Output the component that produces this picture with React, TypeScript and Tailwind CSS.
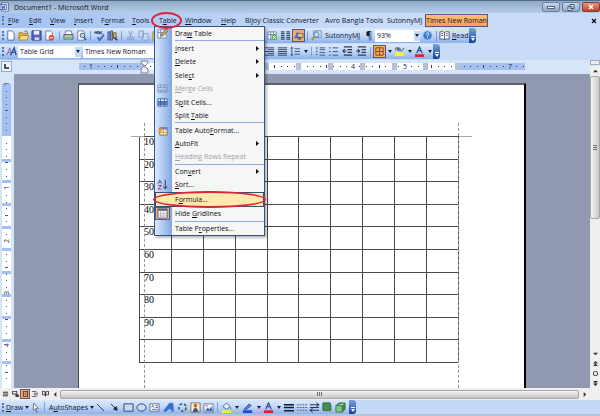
import { Fragment, type ReactNode } from "react";
import clsx from "clsx";

const ui = "font-['Open_Sans','Noto_Sans',sans-serif]";

const glyphs: Record<string, ReactNode> = {
  blank: <path d="M3 1h5l2 3v7H3z" fill="#fff" stroke="#5a6b94" />,
  open: (
    <>
      <path d="M1 3h4l1 1h4v6H1z" fill="#e8b64c" stroke="#a8792a" />
      <path d="M3 6h9l-2 5H1z" fill="#fbdc83" stroke="#b58628" />
      <path d="M7 2c2-2 4 0 3 2" fill="none" stroke="#3f6a3c" />
    </>
  ),
  save: (
    <>
      <path d="M1 1h10v10H1z" fill="#5b5fc0" stroke="#373b8c" />
      <path d="M3 1h6v4H3z" fill="#e9efff" />
      <path d="M4 8h5v3H4z" fill="#d0d4e4" />
    </>
  ),
  permission: (
    <>
      <path d="M2 1h5l2 2v8H2z" fill="#fff" stroke="#6b7898" />
      <circle cx="8" cy="8.500" r="3" fill="#df4d2c" />
      <path d="M6 8.500h4" stroke="#fff" />
    </>
  ),
  print: (
    <>
      <path d="M3 1h6l1 4H2z" fill="#fff" stroke="#6d7890" />
      <path d="M1 5h10v5H1z" fill="#b4bcc4" stroke="#586070" />
      <path d="M3 8h6v3H3z" fill="#75b66e" />
    </>
  ),
  preview: (
    <>
      <path d="M2 1h6l1 2v8H2z" fill="#fff" stroke="#6b7898" />
      <circle cx="7" cy="6" r="2.500" fill="#bcd8f4" stroke="#44546e" />
      <path d="m9 8 2 3" stroke="#44546e" strokeWidth="1.500" />
    </>
  ),
  spelling: (
    <>
      <path d="M1 4V2h2v2M4 1v3h2V2H4M9 2H7v2h2M1 3h2" fill="none" stroke="#333c66" />
      <path d="m4 8 2 3 5-6" fill="none" stroke="#3967c8" strokeWidth="2" />
    </>
  ),
  research: (
    <>
      <path d="M1 2h2v9H1zM4 1h2v10H4z" fill="#8ea5d4" stroke="#45598c" />
      <path d="M7 3h3v6H7z" fill="#e5b14d" stroke="#826426" />
      <path d="m8 8 3 3" stroke="#3d4664" strokeWidth="2" />
    </>
  ),
  cut: <path d="m4 1 3 7M8 1 5 8M4 8a1 1 0 1 0 0 3 1 1 0 0 0 0-3M8 8a1 1 0 1 0 0 3 1 1 0 0 0 0-3" fill="none" stroke="#8297bd" />,
  copy: <path d="M1 1h5v7H1zM5 4h6v7H5z" fill="#cbd9f0" stroke="#8ca1c8" />,
  paste: <path d="M2 2h8v9H2zM4 1h4v2H4z" fill="#eeca79" stroke="#a98439" />,
  sheet: (
    <>
      <path d="M1 2h9v8H1zM1 5h9M4 2v8M7 2v8" fill="#fff" stroke="#6681aa" />
      <path d="M5 5h6v6H5z" fill="#5ea84f" />
      <path d="m6 6 4 4M10 6l-4 4" stroke="#fff" />
    </>
  ),
  columns: <path d="M1 2h4M1 4h4M1 6h4M1 8h4M1 10h4M7 2h4M7 4h4M7 6h4M7 8h4M7 10h4" stroke="#414d68" strokeWidth="1.300" />,
  drawing: (
    <>
      <path d="M5 1 1 9h6z" fill="#3f77c9" />
      <path d="M5 4h6v4H5z" fill="#e6d18b" stroke="#665e70" />
      <circle cx="7" cy="9" r="2" fill="#5366a6" />
    </>
  ),
  docmap: (
    <>
      <path d="M3 1h8v7H3z" fill="#fff" stroke="#5b80b6" />
      <circle cx="6" cy="5" r="3" fill="#b8dcf4" stroke="#4871a6" />
      <path d="M4 7 1 11" stroke="#c08835" strokeWidth="2" />
    </>
  ),
  help: (
    <>
      <circle cx="6" cy="6" r="5" fill="#3c79cf" stroke="#a6c8f0" />
      <path d="M4.500 5c0-3 4-2 3 0L6 6v1M6 8v1" fill="none" stroke="#fff" />
    </>
  ),
  read: <path d="M6 3C4 1 2 2 1 2v8c2 0 4-1 5 1 1-2 3-1 5-1V2C9 2 7 1 6 3zv8M2.500 4h2M2.500 6h2M7.500 4h2M7.500 6h2" fill="#fff" stroke="#49566e" />,
  styles: (
    <>
      <path d="m1 10 3-8 2 8M2 7h3" fill="none" stroke="#9b5aa2" />
      <path d="m5 10 4-8 2 8M6 7h5" fill="none" stroke="#2c55a6" strokeWidth="1.500" />
    </>
  ),
  right: <path d="M1 2h10M4 4h7M1 6h10M4 8h7M1 10h10" stroke="#333e58" />,
  justify: <path d="M1 2h10M1 4h10M1 6h10M1 8h10M1 10h10" stroke="#333e58" />,
  spacing: <path d="M2 2v8M1 3l1-2 1 2M1 9l1 2 1-2M5 3h6M5 6h6M5 9h6" fill="none" stroke="#3c5484" />,
  numbers: <path d="M2 1v3M1 6h2M1 9h2M5 2h6M5 4h6M5 7h6M5 10h6" stroke="#3c5484" />,
  bullets: <path d="M1 2h2M1 6h2M1 10h2M5 2h6M5 6h6M5 10h6" stroke="#3c5484" />,
  outdent: <path d="M2 1h9M6 4h5M6 7h5M2 10h9M5 5.500H1m2-2-2 2 2 2" fill="none" stroke="#303b58" strokeWidth="1.200" />,
  indent: <path d="M2 1h9M6 4h5M6 7h5M2 10h9M0 5.500h4m-2-2 2 2-2 2" fill="none" stroke="#303b58" strokeWidth="1.200" />,
  borders: <path d="M2 2h8v8H2zM6 2v8M2 6h8" fill="none" stroke="#7c4514" />,
  highlight: (
    <>
      <path d="M1 7h10v4H1z" fill="#f7ee35" />
      <path d="M2 5V2h2v3M5 1v4h2V3H5M8 6l3-4" fill="none" stroke="#444d62" />
    </>
  ),
  fontColor: (
    <>
      <path d="m3 8 3-7 3 7M4 5h4" fill="none" stroke="#2e4d94" strokeWidth="1.300" />
      <path d="M1 9h10v3H1z" fill="#e02030" />
    </>
  ),
  drawTable: (
    <>
      <path d="M1 2h9v9H1zM1 5h9M4 2v9" fill="#f5f8ff" stroke="#7187b4" />
      <path d="m4 8 6-7 2 2-6 6z" fill="#dfae4e" stroke="#765c35" />
    </>
  ),
  merge: <path d="M1 2h10v8H1zM1 5h10M1 8h10M4 2v3M8 2v3M4 8v2M8 8v2" fill="none" stroke="#8499bd" />,
  split: (
    <>
      <path d="M1 2h10v8H1z" fill="#f8fbff" stroke="#345a9e" />
      <path d="M1 5h10v3H1z" fill="#5686cf" />
      <path d="M4 2v8M8 2v8M1 5h10M1 8h10" stroke="#345a9e" />
    </>
  ),
  autoFormat: (
    <>
      <path d="M3 3h8v8H3z" fill="#fff3c8" stroke="#8b6a48" />
      <path d="M3 3h8v2H3z" fill="#5b86cb" />
      <path d="M7 5v6M3 8h8" stroke="#c79a55" />
      <path d="M4 2 3 4 1 4l1 2-1 2 2-1 2 1V6l1-2-2 0z" fill="#f59a26" />
    </>
  ),
  sort: (
    <>
      <path d="m1 5 2-4 2 4M2 4h2" fill="none" stroke="#345fae" />
      <path d="M1 7h4l-4 4h4" fill="none" stroke="#9a4163" />
      <path d="M9 1v9M7 8l2 3 2-3" fill="none" stroke="#263553" />
    </>
  ),
  grid: (
    <>
      <path d="M1 1h10v10H1z" fill="#f7f2ea" stroke="#57618b" />
      <path d="M1 2h10" stroke="#57618b" strokeWidth="2" />
      <path d="M4 3v8M7 3v8M1 6h10M1 8.500h10" stroke="#8c90a8" strokeDasharray="1 1" />
    </>
  ),
  pointer: <path d="m4 1 5 6H6l2 4-1 .500-2-4-1.500 1.500z" fill="#fff" stroke="#66748c" />,
  line: <path d="m2 2 8 8" stroke="#26345a" />,
  arrow: <path d="m2 2 5 5M9 9 5 8l3-3z" fill="#1c2744" stroke="#1c2744" />,
  rect: <path d="M1 2h10v8H1z" fill="#c6daf6" stroke="#2b416e" />,
  oval: <ellipse cx="6" cy="6" rx="5" ry="4" fill="#c6daf6" stroke="#2b416e" />,
  textbox: (
    <>
      <path d="M1 2h10v8H1z" fill="#fff" stroke="#5c6e92" />
      <path d="m3 6 1-3 1 3M7 4h3M7 6h3M3 8h7" fill="none" stroke="#5c6e92" />
    </>
  ),
  wordArt: <path d="M0 10 7 1h4l1 9-3 1V8H6l-3 3z" fill="#346ed0" stroke="#7ba4e6" strokeWidth=".500" />,
  diagram: (
    <>
      <circle cx="6" cy="6" r="4" fill="none" stroke="#45608d" strokeWidth="2" strokeDasharray="3 2" />
      <path d="M8 9h3v2H8z" fill="#dba146" />
    </>
  ),
  clip: (
    <>
      <path d="M1 1h10v10H1z" fill="#f9edce" stroke="#7f6d50" />
      <circle cx="6" cy="4" r="2" fill="#b56c38" />
      <path d="M3 11c0-6 6-6 6 0" fill="#4a577c" />
    </>
  ),
  picture: (
    <>
      <path d="M1 2h10v9H1z" fill="#eef4ff" stroke="#6a7b9c" />
      <path d="m2 10 3-4 2 2 2-3 2 5z" fill="#5272a4" />
      <circle cx="4" cy="4" r="1" fill="#d4823c" />
    </>
  ),
  fill: (
    <>
      <path d="M1 9h10v3H1z" fill="#f6ef34" />
      <path d="m2 5 4-4 4 4-4 3z" fill="#e8eef9" stroke="#4c618c" />
      <path d="M10 5c2 2 1 4 0 3" fill="#3d70c5" />
    </>
  ),
  lineColor: (
    <>
      <path d="M1 9h10v3H1z" fill="#2445e8" />
      <path d="m2 8 6-6 2 2-5 4z" fill="#5480c6" stroke="#3c5c97" />
    </>
  ),
  weight: <path d="M1 3h11M1 6h11M1 9.500h11" stroke="#10192c" strokeWidth="1.700" />,
  dashes: <path d="M1 3h11M1 6h11M1 9h11" stroke="#535f78" strokeDasharray="2 1" />,
  arrows: <path d="M1 3h10M8 1l3 2-3 2M1 9h10M4 7 1 9l3 2M1 6h10" fill="none" stroke="#1c2a48" />,
  shadow: (
    <>
      <path d="M3 3h8v8H3z" fill="#9daab8" />
      <path d="M1 1h8v8H1z" fill="#3f9250" stroke="#286337" />
    </>
  ),
  cube: (
    <>
      <path d="M1 4h7v7H1z" fill="#83c785" stroke="#397a43" />
      <path d="m1 4 3-3h7L8 4v7l3-3V1" fill="#438b4c" stroke="#397a43" />
    </>
  ),
};

function Glyph({ name }: { name: string }) {
  return (
    <svg viewBox="0 0 12 12" className="size-[11px] shrink-0" aria-hidden="true">
      {glyphs[name]}
    </svg>
  );
}

// "_" marks the accelerator letter
function Mnemonic({ text }: { text: string }) {
  const at = text.indexOf("_");
  if (at < 0) return <>{text}</>;
  return (
    <span>
      {text.slice(0, at)}
      <span className="underline underline-offset-1">{text[at + 1]}</span>
      {text.slice(at + 2)}
    </span>
  );
}

function Tool({ name, active, wide }: { name: string; active?: boolean; wide?: boolean }) {
  return (
    <button
      aria-label={name}
      className={clsx(
        "flex h-[13px] shrink-0 items-center justify-center",
        wide ? "w-[15px]" : "w-[13px]",
        active && "border border-[#5b5374] bg-[#f7a968]",
      )}
    >
      <Glyph name={name} />
    </button>
  );
}

function Caret() {
  return (
    <svg viewBox="0 0 4 3" className="h-[3px] w-[4px] shrink-0" aria-hidden="true">
      <path d="M0 0h4L2 3z" fill="#17233c" />
    </svg>
  );
}

function Drop({ label }: { label: string }) {
  return (
    <button aria-label={`${label} options`} className="flex h-[13px] w-[7px] shrink-0 items-center justify-center">
      <Caret />
    </button>
  );
}

const Grip = () => <span className="ml-[2px] h-[9px] w-[2px] shrink-0 border-l-2 border-dotted border-[#5474ac]" />;
const Divider = () => <span className="mx-[2px] h-[10px] w-px shrink-0 bg-[#7d9fd3]" />;

function EndCap() {
  return (
    <button aria-label="Toolbar options" className="flex h-full w-[7px] shrink-0 items-end justify-center rounded-r-[3px] bg-gradient-to-b from-[#7aa3e6] to-[#163f95] pb-[2px]">
      <svg viewBox="0 0 4 5" className="h-[5px] w-[4px]" aria-hidden="true">
        <path d="M0 0h4v1H0zM0 2h4L2 5z" fill="#fff" />
      </svg>
    </button>
  );
}

const bar = "flex w-max items-center rounded-r-[3px] bg-gradient-to-b from-[#dce9fc] via-[#c0d7f8] to-[#8db1ea]";

const menus = [
  { text: "_File", width: "w-[21px]" },
  { text: "_Edit", width: "w-[21px]" },
  { text: "_View", width: "w-[24px]" },
  { text: "_Insert", width: "w-[27px]" },
  { text: "F_ormat", width: "w-[31px]" },
  { text: "_Tools", width: "w-[27px]" },
  { text: "T_able", width: "w-[26px]" },
  { text: "_Window", width: "w-[36px]" },
  { text: "_Help", width: "w-[24px]" },
  { text: "Bijoy Classic Converter", width: "w-[80px]" },
  { text: "Avro Bangla Tools", width: "w-[62px]" },
  { text: "SutonnyMJ", width: "w-[38px]" },
];

type Entry = { text: string; icon?: string; sub?: boolean; off?: boolean; hot?: boolean; on?: boolean; line?: boolean };

const entries: Entry[] = [
  { text: "Dra_w Table", icon: "drawTable" },
  { text: "_Insert", sub: true, line: true },
  { text: "_Delete", sub: true },
  { text: "Sele_ct", sub: true },
  { text: "_Merge Cells", icon: "merge", off: true },
  { text: "S_plit Cells...", icon: "split" },
  { text: "Split _Table" },
  { text: "Table Auto_Format...", icon: "autoFormat", line: true },
  { text: "_AutoFit", sub: true },
  { text: "_Heading Rows Repeat", off: true },
  { text: "Con_vert", sub: true, line: true },
  { text: "_Sort...", icon: "sort" },
  { text: "F_ormula...", hot: true },
  { text: "Hide _Gridlines", icon: "grid", on: true },
  { text: "Table P_roperties...", line: true },
];

function TableMenu() {
  return (
    <div role="menu" className="absolute top-[12px] -left-[5px] z-20 flex h-[210px] w-[111px] flex-col border border-[#31548f] bg-[#f6f6f6] bg-gradient-to-r from-[#dce9fc] to-[#7fa6e4] bg-[length:17px_100%] bg-no-repeat shadow-[2px_2px_2px_#0004]">
      {entries.map((e) => (
        <Fragment key={e.text}>
          {e.line && <div className="ml-[20px] h-px shrink-0 bg-[#8fb0de]" />}
          <button
            role="menuitem"
            disabled={e.off}
            className={clsx(
              "relative flex min-h-0 w-full flex-1 items-center whitespace-nowrap",
              e.off ? "text-[#9ca0a6]" : "text-[#0c0e14]",
              e.hot && "border border-[#35507f] bg-[#ffe9ae]",
            )}
          >
            <span className={clsx("flex h-[13px] shrink-0 items-center justify-center", e.hot ? "w-[14px]" : "w-[15px]", e.on && "border border-[#4d5a8c] bg-[#f4ae72]")}>
              {e.icon && <Glyph name={e.icon} />}
            </span>
            <span className="ml-[5px] flex-1 text-left">
              <Mnemonic text={e.text} />
            </span>
            {e.sub && (
              <svg viewBox="0 0 3 5" className="mr-[5px] h-[5px] w-[3px]" aria-hidden="true">
                <path d="M0 0v5l3-2.500z" fill="#111" />
              </svg>
            )}
            {e.hot && <span className="absolute -inset-x-[3px] -inset-y-[2px] z-10 rounded-[50%] border-2 border-[#d9263c]" />}
          </button>
        </Fragment>
      ))}
    </div>
  );
}

function TitleBar() {
  return (
    <header className="flex h-[13px] shrink-0 items-center border-t border-[#536a87] bg-gradient-to-b from-[#91aac7] to-[#b5cde9]">
      <svg viewBox="0 0 12 12" className="size-[10px]" aria-hidden="true">
        <path d="M2 1h8v10H2z" fill="#fff" stroke="#44629d" />
        <path d="M0 3h8v6H0z" fill="#dce8ff" stroke="#44629d" />
        <path d="m2 4 1 4 1-3 1 3 1-4" fill="none" stroke="#2549a0" />
      </svg>
      <h1 className="ml-[4px] flex-1 whitespace-nowrap">Document1 - Microsoft Word</h1>
      <div className="flex h-[10px] gap-[2px]">
        <button aria-label="Minimize" className="flex w-[18px] items-center justify-center rounded-[2px] border border-[#6b809c] bg-gradient-to-b from-[#c5d7ea] to-[#8ca8c8]">
          <span className="h-[3px] w-[8px] border border-[#53657d] bg-white" />
        </button>
        <button aria-label="Restore" className="flex w-[18px] items-center justify-center rounded-[2px] border border-[#6b809c] bg-gradient-to-b from-[#c5d7ea] to-[#8ca8c8]">
          <svg viewBox="0 0 8 7" className="h-[7px] w-[8px]" aria-hidden="true">
            <path d="M3 .500h4v4H3zM1 2.500h4v4H1z" fill="#e9f1f9" stroke="#4a5b72" />
          </svg>
        </button>
        <button aria-label="Close" className="flex w-[18px] items-center justify-center rounded-[2px] border border-[#863b35] bg-gradient-to-b from-[#e69a83] to-[#c53d25]">
          <svg viewBox="0 0 6 6" className="size-[6px]" aria-hidden="true">
            <path d="m1 1 4 4M5 1 1 5" stroke="#fff" strokeWidth="1.500" />
          </svg>
        </button>
      </div>
    </header>
  );
}

function MenuBar() {
  return (
    <nav className="flex h-[15px] shrink-0 items-center">
      <Grip />
      <span className="w-[4px] shrink-0" />
      {menus.map((m) => (
        <div key={m.text} className={clsx("relative shrink-0", m.width)}>
          <button className="block h-[13px] whitespace-nowrap">
            <Mnemonic text={m.text} />
          </button>
          {m.text === "T_able" && (
            <>
              <TableMenu />
              <span className="pointer-events-none absolute -top-[2px] -left-[8px] z-30 h-[17px] w-[31px] rounded-[50%] border-2 border-[#d9263c]" />
            </>
          )}
        </div>
      ))}
      <button className="h-[13px] w-[63px] shrink-0 border border-[#55557f] bg-gradient-to-b from-[#ffbd78] to-[#f3a15d] leading-[11px] whitespace-nowrap">Times New Roman</button>
      <span className="flex-1" />
      <button aria-label="Close document" className="mr-[3px]">
        <svg viewBox="0 0 6 6" className="size-[6px]" aria-hidden="true">
          <path d="m1 1 4 4M5 1 1 5" stroke="#111" strokeWidth="1.300" />
        </svg>
      </button>
    </nav>
  );
}

function Combo({ label, value, width }: { label: string; value: string; width: string }) {
  return (
    <div className={clsx("flex h-[12px] shrink-0 items-center bg-white", width)}>
      <select aria-label={label} className="h-[12px] min-w-0 flex-1 appearance-none bg-white pl-[2px] leading-[12px]">
        <option>{value}</option>
      </select>
      <span className="flex h-[10px] w-[6px] items-center justify-center bg-[#c4daf8]">
        <Caret />
      </span>
    </div>
  );
}

function StandardBar() {
  return (
    <div className={clsx(bar, "h-[15px]")}>
      <Grip />
      {["blank", "open", "save", "permission"].map((n) => <Tool key={n} name={n} />)}
      <span className="w-px shrink-0" />
      <Divider />
      <Tool name="print" />
      <Tool name="preview" />
      <Divider />
      <Tool name="spelling" />
      <Tool name="research" />
      <Divider />
      <Tool name="cut" />
      <Tool name="copy" />
      <Tool name="paste" />
      <span className="w-[103px] shrink-0" />
      <Tool name="sheet" />
      <Tool name="columns" />
      <Tool name="drawing" active />
      <Divider />
      <Tool name="docmap" />
      <button className="ml-[2px] w-[38px] shrink-0 text-left">SutonnyMJ</button>
      <button aria-label="Show marks" className="w-[12px] shrink-0 text-[10px]">¶</button>
      <Combo label="Zoom" value="93%" width="w-[45px]" />
      <span className="w-px shrink-0" />
      <Tool name="help" />
      <Divider />
      <button className="flex w-[30px] shrink-0 items-center gap-[2px]">
        <Glyph name="read" />
        <Mnemonic text="_Read" />
      </button>
      <EndCap />
    </div>
  );
}

function FormattingBar() {
  return (
    <div className={clsx(bar, "h-[15px]")}>
      <Grip />
      <span className="w-px shrink-0" />
      <Tool name="styles" />
      <Combo label="Style" value="Table Grid" width="w-[63px]" />
      <span className="w-[2px] shrink-0" />
      <Combo label="Font" value="Times New Roman" width="w-[90px]" />
      <span className="w-[90px] shrink-0" />
      <Tool name="right" />
      <Tool name="justify" />
      <Tool name="spacing" />
      <Drop label="Spacing" />
      <Divider />
      <Tool name="numbers" />
      <Tool name="bullets" />
      <Tool name="outdent" wide />
      <Tool name="indent" />
      <Divider />
      <Tool name="borders" active />
      <Drop label="Border" />
      <Tool name="highlight" />
      <Drop label="Highlight" />
      <Tool name="fontColor" />
      <Drop label="Font color" />
      <EndCap />
    </div>
  );
}

const rulerMarks = [
  { n: 1, x: 12 },
  { n: 4, x: 274 },
  { n: 5, x: 326 },
  { n: 7, x: 431 },
];

function HorizontalRuler() {
  return (
    <div className="flex h-[14px] shrink-0 bg-[#d7e5f9]">
      <button aria-label="Tab stop" className="m-px flex size-[11px] shrink-0 items-center justify-center border border-[#9aa8c0] bg-[#eef3fb]">
        <svg viewBox="0 0 5 5" className="size-[5px]" aria-hidden="true">
          <path d="M1 0v4h4" fill="none" stroke="#222" strokeWidth="1.500" />
        </svg>
      </button>
      <svg viewBox="0 0 447 14" className="ml-[66px] h-[14px] w-[447px] shrink-0" aria-hidden="true">
        <rect y="3" width="446" height="7" fill="#a3c0f0" />
        <rect x="65" y="3" width="314" height="7" fill="#fff" />
        {Array.from({ length: 68 }, (_, i) => {
          const x = Math.round(12 + (i - 1) * 6.54);
          if ((i + 7) % 8 === 0) return null;
          const half = (i + 3) % 8 === 0;
          return <rect key={i} x={x} y={half ? 5 : 6} width="1" height={half ? 3 : 1} fill="#2d3a58" />;
        })}
        {rulerMarks.map(({ n, x }) => <text key={n} x={x} y="9" textAnchor="middle" fontSize="7" fill="#1f2a44">{n}</text>)}
        {[92, 124, 156, 188, 220, 252, 284, 316, 347, 379].map((x) => (
          <rect key={x} x={x - 3} y="3" width="5" height="7" fill="#b4c1d6" />
        ))}
        <path d="M62 1h7v2l-3 3-4-3zM65 6l4 3v4h-7V9z" fill="#eceff5" stroke="#7b8493" />
      </svg>
      <span className="flex-1" />
      <span className="h-[5px] w-[10px] border border-[#a7abb3] bg-[#eceef2]" />
    </div>
  );
}

function VerticalRuler() {
  return (
    <div className="w-[14px] shrink-0 overflow-hidden bg-[#d7e5f9]">
      <svg viewBox="0 0 14 314" className="h-[314px] w-[14px]" aria-hidden="true">
        <rect x="2" y="10" width="9" height="304" fill="#fff" />
        <rect x="2" y="10" width="9" height="52" fill="#a3c0f0" />
        {Array.from({ length: 46 }, (_, i) => {
          if (i % 8 === 0) return null;
          const half = i % 8 === 4;
          return <rect key={i} x={half ? 5 : 6} y={Math.round(10 + i * 6.54)} width={half ? 3 : 1} height="1" fill="#4a5876" />;
        })}
        {[86, 107, 130, 153, 175, 198, 221, 243, 266, 288].map((y) => (
          <rect key={y} x="2" y={y - 1} width="9" height="3" fill="#a3c0f0" />
        ))}
        {[[1, 10], [1, 114], [2, 167], [3, 219], [4, 271]].map(([n, y]) => (
          <text key={y} transform={`translate(9 ${y + 2}) rotate(-90)`} fontSize="7" fill="#1f2a44">{n}</text>
        ))}
      </svg>
    </div>
  );
}

const rows = ["10", "20", "30", "40", "50", "60", "70", "80", "90", ""];

function Page() {
  return (
    <div className="relative ml-[64px] h-full w-[448px] max-w-full border-t-2 border-r-2 border-l border-t-[#5c6069] border-r-black border-l-[#43464e] bg-white pt-[51px] pl-[60px]">
      <table className="h-[227px] w-[320px] table-fixed border-collapse font-['Liberation_Serif',serif] text-[10px] leading-[10px] text-black">
        <tbody>
          {rows.map((n, r) => (
            <tr key={r} className="h-[22px]">
              {Array.from({ length: 10 }, (_, c) => (
                <td key={c} className="border border-[#4b4b4b] p-0 pl-[4px] align-top">
                  {c === 0 ? n : ""}
                </td>
              ))}
            </tr>
          ))}
        </tbody>
      </table>
      {/* text boundaries */}
      <div className="absolute top-[38px] bottom-0 left-[65px] w-[315px] border-x border-dashed border-[#92959b]" />
      <span className="absolute top-[51px] left-[52px] h-px w-[13px] bg-[#a4a7ac]" />
      <span className="absolute top-[51px] left-[380px] h-px w-[13px] bg-[#a4a7ac]" />
    </div>
  );
}

function Nub({ d, label }: { d: string; label: string }) {
  return (
    <button aria-label={label} className="flex size-[10px] shrink-0 items-center justify-center">
      <svg viewBox="0 0 6 6" className="size-[5px]" aria-hidden="true">
        <path d={d} fill="#333" />
      </svg>
    </button>
  );
}

function VerticalScroll() {
  return (
    <div className="-mt-[8px] flex w-[10px] shrink-0 flex-col bg-[#efefef]">
      <Nub label="Scroll up" d="M0 4h6L3 1z" />
      <div className="flex h-[143px] shrink-0 flex-col items-center justify-center gap-px rounded-[2px] border border-[#a6a6a6] bg-gradient-to-r from-[#f5f5f5] to-[#c8c8c8]">
        {[0, 1, 2].map((i) => <span key={i} className="h-px w-[4px] bg-[#707070]" />)}
      </div>
      <span className="flex-1" />
      <Nub label="Scroll down" d="M0 2h6L3 5z" />
      <Nub label="Previous page" d="M0 3h6L3 0zM0 6h6L3 3z" />
      <Nub label="Browse object" d="M3 0a3 3 0 1 0 0 6 3 3 0 0 0 0-6m0 1a2 2 0 1 1 0 4 2 2 0 0 1 0-4" />
      <Nub label="Next page" d="M0 0h6L3 3zM0 3h6L3 6z" />
    </div>
  );
}

const views = [
  { label: "Normal", d: "M1 1h6v1H1zM1 3h6v1H1zM1 5h6v1H1z" },
  { label: "Web layout", d: "M0 0h6v4H0zM1 1v2h4V1zM4 4h4v3H4z" },
  { label: "Print layout", d: "M1 0h6v7H1zM2 1v5h4V1zM3 2h2v1H3zM3 4h2v1H3z" },
  { label: "Outline", d: "M0 0h5v1H0zM2 2h5v1H2zM2 4h5v1H2zM0 6h5v1H0z" },
  { label: "Reading", d: "M0 0h3l1 1 1-1h3v5H5L4 7 3 5H0zM1 1v3h2V1zM5 1v3h2V1z" },
];

function HorizontalScroll() {
  return (
    <div className="flex h-[12px] shrink-0 items-center bg-[#efefef]">
      {views.map((v) => (
        <button
          key={v.label}
          aria-label={v.label}
          className={clsx("flex size-[10px] shrink-0 items-center justify-center", v.label === "Print layout" && "border border-[#67517a] bg-[#f5a862]")}
        >
          <svg viewBox="0 0 8 7" className="h-[6px] w-[7px]" aria-hidden="true">
            <path d={v.d} fill="#363b47" fillRule="evenodd" />
          </svg>
        </button>
      ))}
      <Nub label="Scroll left" d="M4 0v6L1 3z" />
      <div className="flex h-[9px] flex-1 items-center justify-center gap-px rounded-[2px] border border-[#a6a6a6] bg-gradient-to-b from-[#f5f5f5] to-[#c4c4c4]">
        {[0, 1, 2].map((i) => <span key={i} className="h-[4px] w-px bg-[#707070]" />)}
      </div>
      <Nub label="Scroll right" d="M2 0v6l3-3z" />
      <span className="w-[11px]" />
    </div>
  );
}

function DrawingBar() {
  return (
    <footer className="flex h-[16px] shrink-0 items-start border-b-2 border-[#b3c3d8] bg-[#c4d9f7]">
      <div className={clsx(bar, "h-[14px]")}>
        <Grip />
        <button className="ml-[2px] flex w-[23px] shrink-0 items-center gap-[2px]">
          <Mnemonic text="_Draw" />
          <Caret />
        </button>
        <Tool name="pointer" />
        <Divider />
        <button className="ml-[2px] flex w-[45px] shrink-0 items-center gap-[2px]">
          <Mnemonic text="A_utoShapes" />
          <Caret />
        </button>
        <Tool name="line" />
        <Tool name="arrow" wide />
        <Tool name="rect" />
        <Tool name="oval" />
        <Tool name="textbox" />
        <Tool name="wordArt" wide />
        <Tool name="diagram" />
        <Tool name="clip" />
        <Tool name="picture" />
        <Divider />
        <Tool name="fill" />
        <Drop label="Fill color" />
        <Tool name="lineColor" wide />
        <Drop label="Line color" />
        <Tool name="fontColor" />
        <Drop label="Font color" />
        {["weight", "dashes", "arrows", "shadow", "cube"].map((n) => <Tool key={n} name={n} />)}
        <span className="w-[2px] shrink-0" />
        <EndCap />
      </div>
    </footer>
  );
}

export default function App() {
  return (
    <div className={clsx("flex h-screen w-full flex-col overflow-hidden bg-[#c4d9f7] text-[7px] leading-[13px] text-[#10141f]", ui)}>
      <TitleBar />
      <div className="shrink-0 bg-gradient-to-r from-[#a3c1f2] to-[#c8dcf8] to-60%">
        <MenuBar />
        <div className="flex flex-col gap-px pb-px">
          <StandardBar />
          <FormattingBar />
        </div>
      </div>
      <HorizontalRuler />
      <div className="flex min-h-0 flex-1">
        <VerticalRuler />
        <main className="min-w-0 flex-1 overflow-hidden bg-[#9099af] pt-[9px]">
          <Page />
        </main>
        <VerticalScroll />
      </div>
      <HorizontalScroll />
      <DrawingBar />
    </div>
  );
}
